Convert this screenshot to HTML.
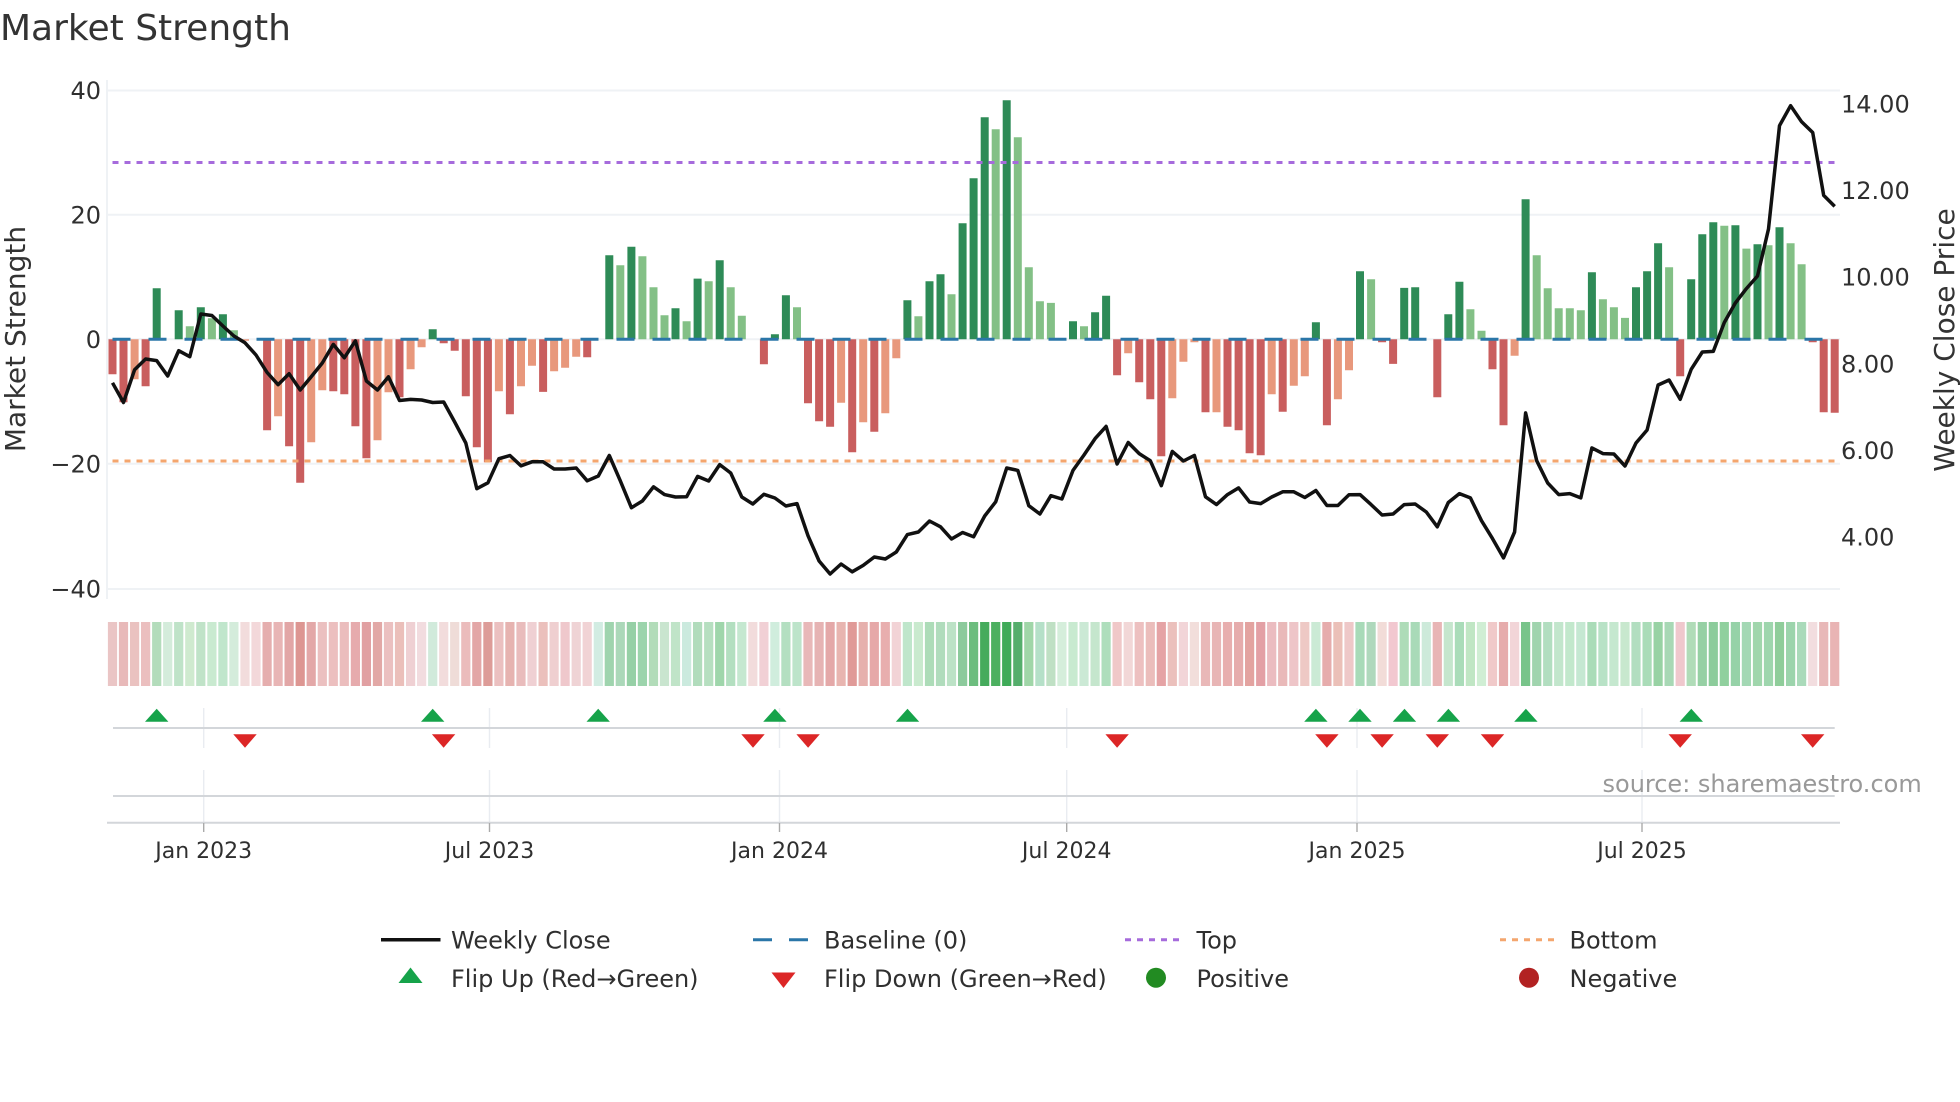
<!DOCTYPE html>
<html lang="en">
<head>
<meta charset="utf-8">
<title>Market Strength</title>
<style>
html,body{margin:0;padding:0;background:#fff;width:1960px;height:1102px;overflow:hidden}
svg{display:block}
text{font-family:"DejaVu Sans","Liberation Sans",sans-serif;fill:#2f2f2f}
.t{font-size:24px}
.x{font-size:22px;text-anchor:middle}
.l{font-size:24px}
.a{font-size:28px;text-anchor:middle;fill:#333}
</style>
</head>
<body>
<svg width="1960" height="1102" viewBox="0 0 1960 1102" xmlns="http://www.w3.org/2000/svg">
<rect width="1960" height="1102" fill="#fff"/>

<text x="0" y="40" style="font-size:36px;fill:#333">Market Strength</text>

<!-- top panel grid -->
<g stroke="#eff2f5" stroke-width="2" fill="none">
<path d="M107 80V599"/>
<path d="M107 90.5H1840M107 214.7H1840M107 339.3H1840M107 463.8H1840M107 589H1840"/>
</g>

<!-- bars -->
<g fill="none" stroke-width="8">
<path stroke="#2e8b57" d="M156.7 339.3v-51M178.7 339.3v-29M200.8 339.3v-32M222.9 339.3v-25M432.7 339.3v-10M609.3 339.3v-84M631.4 339.3v-92.5M675.5 339.3v-31M697.6 339.3v-60.7M719.7 339.3v-79M774.9 339.3v-5M785.9 339.3v-44M907.4 339.3v-39M929.5 339.3v-58M940.5 339.3v-65M962.6 339.3v-116M973.6 339.3v-161M984.7 339.3v-222M1006.7 339.3v-239M1073 339.3v-18M1095.1 339.3v-27M1106.1 339.3v-43.6M1315.9 339.3v-17M1360 339.3v-68M1404.2 339.3v-51.4M1415.2 339.3v-52M1448.3 339.3v-25M1459.4 339.3v-57.5M1525.6 339.3v-140M1591.9 339.3v-67M1636 339.3v-52M1647.1 339.3v-68M1658.1 339.3v-96M1691.2 339.3v-60M1702.3 339.3v-105M1713.3 339.3v-117M1735.4 339.3v-114M1757.5 339.3v-95M1779.5 339.3v-112"/>
<path stroke="#83c086" d="M189.8 339.3v-13M211.9 339.3v-21M233.9 339.3v-9M620.3 339.3v-74M642.4 339.3v-83M653.5 339.3v-52M664.5 339.3v-24M686.6 339.3v-18M708.7 339.3v-58M730.7 339.3v-52M741.8 339.3v-23.6M797 339.3v-32M918.4 339.3v-23M951.5 339.3v-45M995.7 339.3v-210M1017.8 339.3v-202M1028.8 339.3v-72M1039.9 339.3v-38M1050.9 339.3v-36.4M1084 339.3v-13M1371.1 339.3v-60M1470.4 339.3v-30M1481.5 339.3v-8.6M1536.7 339.3v-84M1547.7 339.3v-51M1558.7 339.3v-31M1569.8 339.3v-31M1580.8 339.3v-29M1602.9 339.3v-40M1613.9 339.3v-32M1625 339.3v-21.4M1669.1 339.3v-72M1724.3 339.3v-113.5M1746.4 339.3v-90.7M1768.5 339.3v-94M1790.6 339.3v-96M1801.6 339.3v-75"/>
<path stroke="#c95e5e" d="M112.5 339.3v35M123.5 339.3v63M145.6 339.3v47M267.1 339.3v91M289.1 339.3v107M300.2 339.3v143.5M333.3 339.3v52M344.3 339.3v55M355.4 339.3v87M366.4 339.3v119M399.5 339.3v58M443.7 339.3v4M454.7 339.3v11.5M465.8 339.3v57M476.8 339.3v108M487.9 339.3v123M509.9 339.3v75M543.1 339.3v52.6M587.2 339.3v18M763.9 339.3v25M808 339.3v64M819.1 339.3v82M830.1 339.3v87.5M852.2 339.3v113M874.3 339.3v92.5M1117.1 339.3v36M1139.2 339.3v43M1150.3 339.3v60M1161.3 339.3v117M1205.5 339.3v73M1227.5 339.3v87.5M1238.6 339.3v91M1249.6 339.3v114M1260.7 339.3v116M1282.7 339.3v72.5M1326.9 339.3v86M1382.1 339.3v3M1393.1 339.3v24.6M1437.3 339.3v58M1492.5 339.3v30M1503.5 339.3v86M1680.2 339.3v37M1812.7 339.3v3M1823.7 339.3v73M1834.7 339.3v73.5"/>
<path stroke="#e8987c" d="M134.6 339.3v40M245 339.3v1.5M278.1 339.3v77M311.2 339.3v103M322.3 339.3v51M377.5 339.3v101M388.5 339.3v53M410.6 339.3v30M421.6 339.3v8M498.9 339.3v52M521 339.3v47M532 339.3v26.5M554.1 339.3v32M565.1 339.3v28.5M576.2 339.3v17.4M841.1 339.3v63.5M863.2 339.3v83M885.3 339.3v74M896.3 339.3v19M1128.2 339.3v14M1172.3 339.3v59M1183.4 339.3v22.5M1194.4 339.3v3M1216.5 339.3v73M1271.7 339.3v55M1293.8 339.3v46.4M1304.8 339.3v37M1337.9 339.3v60M1349 339.3v31M1514.6 339.3v16.4"/>
</g>

<!-- reference lines -->
<g fill="none">
<path d="M112.5 339.3H1835" stroke="#2a76a8" stroke-width="3" stroke-dasharray="18 18"/>
<path d="M112.5 162.5H1835" stroke="#a66bdc" stroke-width="3" stroke-dasharray="6 6"/>
<path d="M112.5 461H1835" stroke="#f4a66e" stroke-width="3" stroke-dasharray="6 6"/>
</g>

<!-- weekly close -->
<path fill="none" stroke="#111" stroke-width="3.5" stroke-linejoin="round" d="M112.5 382.8L123.5 402.5L134.6 369.7L145.6 359L156.7 360.6L167.7 376L178.7 350.7L189.8 356.7L200.8 314L211.9 315.5L222.9 326L233.9 336L245 342.8L256 355L267.1 372.5L278.1 384.7L289.1 373.7L300.2 390L311.2 376.8L322.3 363L333.3 344.4L344.3 357.8L355.4 340.8L366.4 381L377.5 390L388.5 376.8L399.5 400.5L410.6 399.4L421.6 400L432.7 402.5L443.7 402L454.7 422L465.8 443L476.8 488.7L487.9 482.8L498.9 458.7L509.9 455.5L521 465.8L532 461.8L543.1 461.8L554.1 469L565.1 469L576.2 468L587.2 480.8L598.3 476L609.3 455.5L620.3 480.8L631.4 507.7L642.4 501L653.5 486.8L664.5 494.6L675.5 497L686.6 496.8L697.6 476.4L708.7 481L719.7 464.6L730.7 473L741.8 497L752.8 504L763.9 494.3L774.9 498L785.9 506L797 503.6L808 535.7L819.1 561L830.1 574L841.1 564L852.2 571.8L863.2 565.4L874.3 557L885.3 559L896.3 552L907.4 534.6L918.4 532L929.5 521L940.5 526.8L951.5 539L962.6 532.5L973.6 536.8L984.7 516L995.7 501.8L1006.7 468L1017.8 470.4L1028.8 505.7L1039.9 514L1050.9 495.7L1061.9 499L1073 470.4L1084 455L1095.1 438.6L1106.1 426.4L1117.1 464L1128.2 442.5L1139.2 453.6L1150.3 460.7L1161.3 485.7L1172.3 451.4L1183.4 461L1194.4 455.4L1205.5 496.8L1216.5 504.6L1227.5 494.6L1238.6 487.9L1249.6 502L1260.7 503.6L1271.7 497L1282.7 491.8L1293.8 491.8L1304.8 497.5L1315.9 490.5L1326.9 505.5L1337.9 505.5L1349 494.8L1360 494.6L1371.1 504.6L1382.1 515L1393.1 514L1404.2 504.6L1415.2 504L1426.3 512L1437.3 526.8L1448.3 502.5L1459.4 493.6L1470.4 497.9L1481.5 520.7L1492.5 538.6L1503.5 557.9L1514.6 532L1525.6 412.9L1536.7 460.7L1547.7 483L1558.7 494.6L1569.8 493.6L1580.8 497.9L1591.9 447.9L1602.9 453.6L1613.9 454L1625 466L1636 443L1647.1 430L1658.1 385L1669.1 380L1680.2 399.3L1691.2 369.3L1702.3 352L1713.3 351.4L1724.3 322.5L1735.4 302.9L1746.4 288.6L1757.5 276L1768.5 229L1779.5 125.7L1790.6 105.7L1801.6 121.8L1812.7 132.5L1823.7 195.4L1834.7 206.4"/>

<!-- left ticks -->
<g class="t" text-anchor="end">
<text x="101" y="99.2">40</text>
<text x="101" y="223.4">20</text>
<text x="101" y="348">0</text>
<text x="101" y="472.5">−20</text>
<text x="101" y="597.7">−40</text>
</g>
<!-- right ticks -->
<g class="t">
<text x="1841" y="112.3">14.00</text>
<text x="1841" y="199.1">12.00</text>
<text x="1841" y="285.5">10.00</text>
<text x="1841" y="372.3">8.00</text>
<text x="1841" y="459.1">6.00</text>
<text x="1841" y="545.5">4.00</text>
</g>
<text class="a" transform="translate(25 339) rotate(-90)">Market Strength</text>
<text class="a" transform="translate(1954 340) rotate(-90)">Weekly Close Price</text>

<!-- heat strip -->
<g fill="none" stroke-width="9.2">
<path stroke="#eac5c5" d="M112.5 622V686"/><path stroke="#e8b9b9" d="M123.5 622V686"/><path stroke="#eac2c0" d="M134.6 622V686"/><path stroke="#ebbfbf" d="M145.6 622V686"/><path stroke="#b3dcbb" d="M156.7 622V686"/><path stroke="#d4ecdb" d="M167.7 622V686"/><path stroke="#bfe3c8" d="M178.7 622V686"/><path stroke="#cfeacf" d="M189.8 622V686"/><path stroke="#c0e3c8" d="M200.8 622V686"/><path stroke="#c9ead0" d="M211.9 622V686"/><path stroke="#c0e6cc" d="M222.9 622V686"/><path stroke="#d4ecdb" d="M233.9 622V686"/><path stroke="#f2dcdc" d="M245 622V686"/><path stroke="#f3d8da" d="M256 622V686"/><path stroke="#e5aeae" d="M267.1 622V686"/><path stroke="#e8b5b5" d="M278.1 622V686"/><path stroke="#e2a6a6" d="M289.1 622V686"/><path stroke="#dd9692" d="M300.2 622V686"/><path stroke="#e3a8a8" d="M311.2 622V686"/><path stroke="#ebc0c0" d="M322.3 622V686"/><path stroke="#ecbfbf" d="M333.3 622V686"/><path stroke="#ebbdbd" d="M344.3 622V686"/><path stroke="#e6abad" d="M355.4 622V686"/><path stroke="#e1a0a2" d="M366.4 622V686"/><path stroke="#e2a8a6" d="M377.5 622V686"/><path stroke="#ebc0c0" d="M388.5 622V686"/><path stroke="#ebbfba" d="M399.5 622V686"/><path stroke="#efd0d3" d="M410.6 622V686"/><path stroke="#f2dcdf" d="M421.6 622V686"/><path stroke="#d1eadb" d="M432.7 622V686"/><path stroke="#f2dcdc" d="M443.7 622V686"/><path stroke="#efdcd8" d="M454.7 622V686"/><path stroke="#ebbcbc" d="M465.8 622V686"/><path stroke="#e3a6a6" d="M476.8 622V686"/><path stroke="#dd9c98" d="M487.9 622V686"/><path stroke="#ebc0c0" d="M498.9 622V686"/><path stroke="#e6b3b0" d="M509.9 622V686"/><path stroke="#e9bcbc" d="M521 622V686"/><path stroke="#efd0d3" d="M532 622V686"/><path stroke="#ebc0bc" d="M543.1 622V686"/>
<path stroke="#efcfd0" d="M554.1 622V686"/><path stroke="#efc8cc" d="M565.1 622V686"/><path stroke="#efd3d5" d="M576.2 622V686"/><path stroke="#f1d3d5" d="M587.2 622V686"/><path stroke="#d2ece2" d="M598.3 622V686"/><path stroke="#9fd4ae" d="M609.3 622V686"/><path stroke="#abd8b9" d="M620.3 622V686"/><path stroke="#96d0a6" d="M631.4 622V686"/><path stroke="#9cd4ac" d="M642.4 622V686"/><path stroke="#b2dcb9" d="M653.5 622V686"/><path stroke="#c9e5cf" d="M664.5 622V686"/><path stroke="#c0e4c8" d="M675.5 622V686"/><path stroke="#cbeade" d="M686.6 622V686"/><path stroke="#b1dcbc" d="M697.6 622V686"/><path stroke="#b6dfc0" d="M708.7 622V686"/><path stroke="#9fd6ab" d="M719.7 622V686"/><path stroke="#b3dfc0" d="M730.7 622V686"/><path stroke="#c5e8d0" d="M741.8 622V686"/><path stroke="#f2dcdc" d="M752.8 622V686"/><path stroke="#f1d0d5" d="M763.9 622V686"/><path stroke="#d0eddd" d="M774.9 622V686"/><path stroke="#b4dfc1" d="M785.9 622V686"/><path stroke="#bde4ca" d="M797 622V686"/><path stroke="#e8b8b8" d="M808 622V686"/><path stroke="#e6b3b3" d="M819.1 622V686"/><path stroke="#e4a8a8" d="M830.1 622V686"/><path stroke="#e8b5b0" d="M841.1 622V686"/><path stroke="#e09a98" d="M852.2 622V686"/><path stroke="#e6b0ad" d="M863.2 622V686"/><path stroke="#e6a8a8" d="M874.3 622V686"/><path stroke="#e8aeae" d="M885.3 622V686"/><path stroke="#f2d3d6" d="M896.3 622V686"/><path stroke="#bfe6cb" d="M907.4 622V686"/><path stroke="#c9eace" d="M918.4 622V686"/><path stroke="#addcb8" d="M929.5 622V686"/><path stroke="#b0dcbc" d="M940.5 622V686"/><path stroke="#bce2c6" d="M951.5 622V686"/><path stroke="#8cca9c" d="M962.6 622V686"/><path stroke="#6cbd7e" d="M973.6 622V686"/><path stroke="#45ab5c" d="M984.7 622V686"/>
<path stroke="#4cb060" d="M995.7 622V686"/><path stroke="#3fab58" d="M1006.7 622V686"/><path stroke="#55ae6c" d="M1017.8 622V686"/><path stroke="#a0d6a8" d="M1028.8 622V686"/><path stroke="#b5e0c8" d="M1039.9 622V686"/><path stroke="#bfe0c4" d="M1050.9 622V686"/><path stroke="#d5eedb" d="M1061.9 622V686"/><path stroke="#c8ead0" d="M1073 622V686"/><path stroke="#cbe9d5" d="M1084 622V686"/><path stroke="#c5e6cd" d="M1095.1 622V686"/><path stroke="#aedebc" d="M1106.1 622V686"/><path stroke="#f0c8c8" d="M1117.1 622V686"/><path stroke="#f2d7d7" d="M1128.2 622V686"/><path stroke="#edc0c0" d="M1139.2 622V686"/><path stroke="#ebbdbb" d="M1150.3 622V686"/><path stroke="#e5a3a5" d="M1161.3 622V686"/><path stroke="#ebc0bc" d="M1172.3 622V686"/><path stroke="#f2d5d8" d="M1183.4 622V686"/><path stroke="#f2dedb" d="M1194.4 622V686"/><path stroke="#e9b8b8" d="M1205.5 622V686"/><path stroke="#e8b5b5" d="M1216.5 622V686"/><path stroke="#e8aeae" d="M1227.5 622V686"/><path stroke="#e6acac" d="M1238.6 622V686"/><path stroke="#e3a3a0" d="M1249.6 622V686"/><path stroke="#e3a0a5" d="M1260.7 622V686"/><path stroke="#ebbcc0" d="M1271.7 622V686"/><path stroke="#e9b9b9" d="M1282.7 622V686"/><path stroke="#eec5c8" d="M1293.8 622V686"/><path stroke="#eec9c5" d="M1304.8 622V686"/><path stroke="#cbead5" d="M1315.9 622V686"/><path stroke="#e6acac" d="M1326.9 622V686"/><path stroke="#ebc0b8" d="M1337.9 622V686"/><path stroke="#eec8c8" d="M1349 622V686"/><path stroke="#a8dab8" d="M1360 622V686"/><path stroke="#afd8bc" d="M1371.1 622V686"/><path stroke="#f2dcd8" d="M1382.1 622V686"/><path stroke="#f2c8d0" d="M1393.1 622V686"/>
<path stroke="#aedcb8" d="M1404.2 622V686"/><path stroke="#a9dab8" d="M1415.2 622V686"/><path stroke="#cdeada" d="M1426.3 622V686"/><path stroke="#e8b5b5" d="M1437.3 622V686"/><path stroke="#c5e6cd" d="M1448.3 622V686"/><path stroke="#aadcb9" d="M1459.4 622V686"/><path stroke="#c0e6c4" d="M1470.4 622V686"/><path stroke="#d0eed4" d="M1481.5 622V686"/><path stroke="#f0c9c9" d="M1492.5 622V686"/><path stroke="#e6acac" d="M1503.5 622V686"/><path stroke="#f2d5d8" d="M1514.6 622V686"/><path stroke="#78c48a" d="M1525.6 622V686"/><path stroke="#a0d4ae" d="M1536.7 622V686"/><path stroke="#b2dec0" d="M1547.7 622V686"/><path stroke="#c2e6cc" d="M1558.7 622V686"/><path stroke="#c2e8cc" d="M1569.8 622V686"/><path stroke="#c5e8d2" d="M1580.8 622V686"/><path stroke="#aadcb8" d="M1591.9 622V686"/><path stroke="#b8e2c6" d="M1602.9 622V686"/><path stroke="#c5e8cf" d="M1613.9 622V686"/><path stroke="#c8e8ce" d="M1625 622V686"/><path stroke="#b2dec0" d="M1636 622V686"/><path stroke="#aadcb8" d="M1647.1 622V686"/><path stroke="#98d2a4" d="M1658.1 622V686"/><path stroke="#a8d8b5" d="M1669.1 622V686"/><path stroke="#efc8cd" d="M1680.2 622V686"/><path stroke="#b0dcb8" d="M1691.2 622V686"/><path stroke="#96d0a4" d="M1702.3 622V686"/><path stroke="#8ccc9b" d="M1713.3 622V686"/><path stroke="#90d09e" d="M1724.3 622V686"/><path stroke="#96d2a8" d="M1735.4 622V686"/><path stroke="#a3d8b4" d="M1746.4 622V686"/><path stroke="#a0d6ac" d="M1757.5 622V686"/><path stroke="#9ed6ad" d="M1768.5 622V686"/><path stroke="#8fcd9a" d="M1779.5 622V686"/><path stroke="#9cd4ac" d="M1790.6 622V686"/><path stroke="#aadaba" d="M1801.6 622V686"/><path stroke="#f2dddf" d="M1812.7 622V686"/><path stroke="#e8b8b8" d="M1823.7 622V686"/><path stroke="#e9b4b4" d="M1834.7 622V686"/>
</g>

<!-- flip panel grid -->
<g fill="none" stroke="#e9ecf1" stroke-width="1.4">
<path d="M203.7 708V748M489.5 708V748M779.5 708V748M1066.7 708V748M1357 708V748M1642 708V748"/>
<path d="M203.7 770V822M489.5 770V822M779.5 770V822M1066.7 770V822M1357 770V822M1642 770V822"/>
</g>
<g fill="none" stroke="#d3d6da" stroke-width="2">
<path d="M113 728H1834.7"/>
<path d="M113 796H1834.7"/>
<path d="M107 822.7H1840"/>
</g>
<path fill="none" stroke="#aaa" stroke-width="1.4" d="M203.7 823V832M489.5 823V832M779.5 823V832M1066.7 823V832M1357 823V832M1642 823V832"/>

<!-- flip markers -->
<g fill="#16a34a">
<polygon points="145,721.7 156.7,708.7 168.4,721.7"/>
<polygon points="421,721.7 432.7,708.7 444.4,721.7"/>
<polygon points="586.5,721.7 598.2,708.7 609.9,721.7"/>
<polygon points="763.2,721.7 774.9,708.7 786.6,721.7"/>
<polygon points="895.8,721.7 907.5,708.7 919.2,721.7"/>
<polygon points="1304.2,721.7 1315.9,708.7 1327.6,721.7"/>
<polygon points="1348.3,721.7 1360,708.7 1371.7,721.7"/>
<polygon points="1392.8,721.7 1404.5,708.7 1416.2,721.7"/>
<polygon points="1436.7,721.7 1448.4,708.7 1460.1,721.7"/>
<polygon points="1514.2,721.7 1525.9,708.7 1537.6,721.7"/>
<polygon points="1679.6,721.7 1691.3,708.7 1703,721.7"/>
</g>
<g fill="#dc2626">
<polygon points="233.3,734.3 245,747.7 256.7,734.3"/>
<polygon points="431.9,734.3 443.6,747.7 455.3,734.3"/>
<polygon points="741.3,734.3 753,747.7 764.7,734.3"/>
<polygon points="796.4,734.3 808.1,747.7 819.8,734.3"/>
<polygon points="1105.4,734.3 1117.1,747.7 1128.8,734.3"/>
<polygon points="1315.2,734.3 1326.9,747.7 1338.6,734.3"/>
<polygon points="1370.4,734.3 1382.1,747.7 1393.8,734.3"/>
<polygon points="1425.6,734.3 1437.3,747.7 1449,734.3"/>
<polygon points="1480.8,734.3 1492.5,747.7 1504.2,734.3"/>
<polygon points="1668.5,734.3 1680.2,747.7 1691.9,734.3"/>
<polygon points="1801,734.3 1812.7,747.7 1824.4,734.3"/>
</g>

<!-- x ticks -->
<text class="x" x="203.7" y="858">Jan 2023</text>
<text class="x" x="489.5" y="858">Jul 2023</text>
<text class="x" x="779.5" y="858">Jan 2024</text>
<text class="x" x="1066.7" y="858">Jul 2024</text>
<text class="x" x="1357" y="858">Jan 2025</text>
<text class="x" x="1642" y="858">Jul 2025</text>

<text class="l" x="1602.5" y="792" style="fill:#999">source: sharemaestro.com</text>

<!-- legend -->
<path d="M381 939.7H440.5" stroke="#111" stroke-width="3.5" fill="none"/>
<path d="M753 939.7H772M789 939.7H808" stroke="#2a76a8" stroke-width="3" fill="none"/>
<path d="M1125 939.7H1182" stroke="#a66bdc" stroke-width="3" stroke-dasharray="6 6" fill="none"/>
<path d="M1500 939.7H1555" stroke="#f4a66e" stroke-width="3" stroke-dasharray="6 6" fill="none"/>
<polygon points="398.5,983 410.5,967.5 422.5,983" fill="#16a34a"/>
<polygon points="771.5,972.5 783.5,988 795.5,972.5" fill="#dc2626"/>
<circle cx="1156" cy="977.7" r="10" fill="#228b22"/>
<circle cx="1529" cy="977.7" r="10" fill="#b22222"/>
<g class="l">
<text x="451" y="948.5">Weekly Close</text>
<text x="824" y="948.5">Baseline (0)</text>
<text x="1196.5" y="948.5">Top</text>
<text x="1569.5" y="948.5">Bottom</text>
<text x="451" y="987">Flip Up (Red→Green)</text>
<text x="824" y="987">Flip Down (Green→Red)</text>
<text x="1196.5" y="987">Positive</text>
<text x="1569.5" y="987">Negative</text>
</g>
</svg>
</body>
</html>
